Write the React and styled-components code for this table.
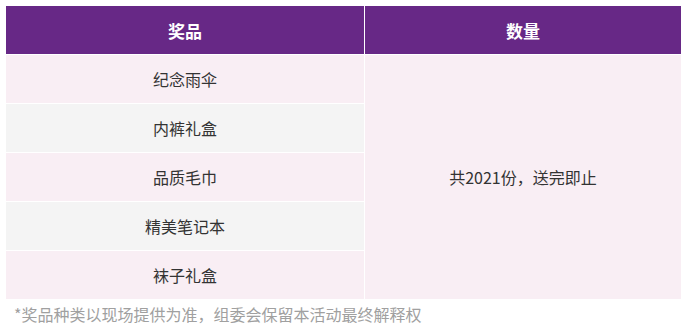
import React from 'react';
import styled, { createGlobalStyle } from 'styled-components';

const GlobalStyle = createGlobalStyle`
  html, body {
    margin: 0;
    padding: 0;
    background: #fff;
  }
  body {
    font-family: "Noto Sans CJK SC", "Noto Sans", sans-serif;
  }
`;

const Wrapper = styled.div`
  padding: 6px 0 0 6px;
  width: 675px;
`;

// quantity cell is placed explicitly, so the prize cells auto-flow down column 1
const Table = styled.div`
  display: grid;
  grid-template-columns: 358px 316px;
  grid-template-rows: repeat(6, 48px);
  grid-auto-flow: row;
  gap: 1px;
  background: #fff;
`;

const HeadCell = styled.div`
  display: flex;
  align-items: center;
  justify-content: center;
  background: #672886;
  color: #fff;
  font-size: 17px;
  font-weight: 700;
`;

const Cell = styled.div`
  display: flex;
  align-items: center;
  justify-content: center;
  background: ${(p) => (p.$shade ? '#f4f4f4' : '#f9eef4')};
  color: #333;
  font-size: 16px;
`;

const QtyCell = styled(Cell)`
  grid-column: 2;
  grid-row: 2 / span 5;
`;

const Note = styled.p`
  margin: 3px 0 0;
  padding-left: 8px;
  line-height: 24px;
  font-size: 16px;
  color: #a0a0a0;
`;

const prizes = ['纪念雨伞', '内裤礼盒', '品质毛巾', '精美笔记本', '袜子礼盒'];

export default function App() {
  return (
    <Wrapper>
      <GlobalStyle />
      <Table>
        <HeadCell>奖品</HeadCell>
        <HeadCell>数量</HeadCell>
        <QtyCell>共2021份，送完即止</QtyCell>
        {prizes.map((name, i) => (
          <Cell key={name} $shade={i % 2 === 1}>
            {name}
          </Cell>
        ))}
      </Table>
      <Note>*奖品种类以现场提供为准，组委会保留本活动最终解释权</Note>
    </Wrapper>
  );
}
